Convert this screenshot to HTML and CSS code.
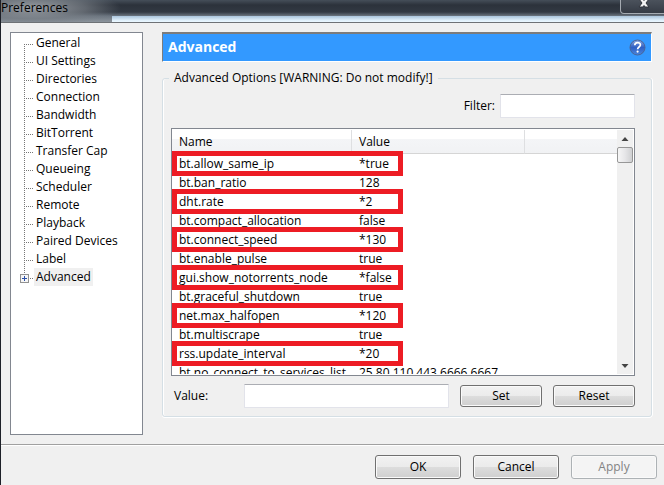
FILE: index.html
```html
<!DOCTYPE html>
<html lang="en">

<head>
  <meta charset="UTF-8">
  <meta name="viewport" content="width=device-width, initial-scale=1.0">
  <title>Preferences</title>
  <link rel="stylesheet" href="styles.css">
</head>

<body>
  <!-- Title bar -->
  <header class="titlebar">
    <span class="title">Preferences</span>
    <button class="close" type="button" aria-label="Close">
      <svg width="12" height="10" viewBox="0 0 12 10">
        <path d="M1 -1h4l1 1.500 1-1.500h4l-3 4 3 4h-4l-1-1.500-1 1.500h-4l3-4z" fill="#f4f4f4" stroke="#30343c" stroke-width="1"/>
      </svg>
    </button>
  </header>

  <main class="content">
    <!-- Category tree -->
    <nav class="tree">
      <ul>
        <li><a href="#general">General</a></li>
        <li><a href="#ui">UI Settings</a></li>
        <li><a href="#directories">Directories</a></li>
        <li><a href="#connection">Connection</a></li>
        <li><a href="#bandwidth">Bandwidth</a></li>
        <li><a href="#bittorrent">BitTorrent</a></li>
        <li><a href="#transfer">Transfer Cap</a></li>
        <li><a href="#queueing">Queueing</a></li>
        <li><a href="#scheduler">Scheduler</a></li>
        <li><a href="#remote">Remote</a></li>
        <li><a href="#playback">Playback</a></li>
        <li><a href="#devices">Paired Devices</a></li>
        <li><a href="#label">Label</a></li>
        <li class="parent">
          <button class="expand" type="button" aria-label="Expand Advanced">
            <svg width="9" height="9" viewBox="0 0 9 9">
              <rect x="0.500" y="0.500" width="8" height="8" fill="#f6f6f6" stroke="#919191"/>
              <path d="M2 4.500h5M4.500 2v5" stroke="#2b4fa8"/>
            </svg>
          </button>
          <a href="#advanced" class="selected">Advanced</a>
        </li>
      </ul>
    </nav>

    <!-- Advanced page -->
    <section class="page">
      <div class="banner">
        <h1>Advanced</h1>
        <button class="help" type="button" aria-label="Help">
          <svg width="17" height="17" viewBox="0 0 17 17">
            <defs>
              <linearGradient id="helpFill" x1="0" y1="0" x2="0" y2="1">
                <stop offset="0" stop-color="#8aa6e0"/>
                <stop offset="0.500" stop-color="#2f5fc4"/>
                <stop offset="1" stop-color="#4a86dc"/>
              </linearGradient>
            </defs>
            <circle cx="8.500" cy="8.500" r="7.500" fill="url(#helpFill)" stroke="#4a6496"/>
            <path d="M5.800 6.300c0-3.600 5.600-3.500 5.600-.3 0 2-2.800 2-2.800 4.200" fill="none" stroke="#fff" stroke-width="1.700"/>
            <circle cx="8.600" cy="12.600" r="1.100" fill="#fff"/>
          </svg>
        </button>
      </div>

      <fieldset class="options">
        <legend>Advanced Options [WARNING: Do not modify!]</legend>

        <div class="filter-row">
          <label for="filter">Filter:</label>
          <input id="filter" type="text">
        </div>

        <div class="list">
          <div class="rows">
            <table>
              <thead>
                <tr><th class="col-name">Name</th><th class="col-value">Value</th><th></th></tr>
              </thead>
              <tbody>
                <tr class="marked"><td>bt.allow_same_ip</td><td>*true</td><td></td></tr>
                <tr><td>bt.ban_ratio</td><td>128</td><td></td></tr>
                <tr class="marked"><td>dht.rate</td><td>*2</td><td></td></tr>
                <tr><td>bt.compact_allocation</td><td>false</td><td></td></tr>
                <tr class="marked"><td>bt.connect_speed</td><td>*130</td><td></td></tr>
                <tr><td>bt.enable_pulse</td><td>true</td><td></td></tr>
                <tr class="marked"><td>gui.show_notorrents_node</td><td>*false</td><td></td></tr>
                <tr><td>bt.graceful_shutdown</td><td>true</td><td></td></tr>
                <tr class="marked"><td>net.max_halfopen</td><td>*120</td><td></td></tr>
                <tr><td>bt.multiscrape</td><td>true</td><td></td></tr>
                <tr class="marked"><td>rss.update_interval</td><td>*20</td><td></td></tr>
                <tr><td>bt.no_connect_to_services_list</td><td>25,80,110,443,6666,6667</td><td></td></tr>
              </tbody>
            </table>
          </div>
          <div class="scrollbar">
            <svg width="16" height="17" viewBox="0 0 16 17"><path d="M4.500 11L8 7l3.500 4z" fill="#444"/></svg>
            <div class="thumb"></div>
            <svg class="down" width="16" height="17" viewBox="0 0 16 17"><path d="M4.500 7h7L8 11z" fill="#444"/></svg>
          </div>
        </div>

        <div class="value-row">
          <label for="value">Value:</label>
          <input id="value" type="text">
          <button class="btn" type="button">Set</button>
          <button class="btn" type="button">Reset</button>
        </div>
      </fieldset>
    </section>
  </main>

  <!-- Dialog buttons -->
  <footer class="actions">
    <button class="btn" type="button">OK</button>
    <button class="btn" type="button">Cancel</button>
    <button class="btn" type="button" disabled>Apply</button>
  </footer>
</body>

</html>
```
FILE: styles.css
```css
*,
*::after {
  box-sizing: border-box;
}

body {
  margin: 0;
  height: 100vh;
  display: flex;
  flex-direction: column;
  overflow: hidden;
  border-left: 1px solid #1d2028;
  background: #f0f0f0;
  color: #000;
  font-family: "Open Sans", "Noto Sans", sans-serif;
  font-size: 12px;
  line-height: 18px;
}

button,
input {
  font: inherit;
  color: inherit;
}

/* Title bar */
.titlebar {
  display: flex;
  justify-content: space-between;
  align-items: flex-start;
  height: 23px;
  flex: none;
  border-bottom: 1px solid #6e7276;
  background:
    linear-gradient(#a9c4dc, #e8f6ff 5px) no-repeat 111px 16px / 100% 6px,
    radial-gradient(ellipse 90px 18px at 30px 8px, #9a9fa5, rgba(120, 126, 133, 0.7) 60%, rgba(70, 76, 86, 0)) no-repeat,
    linear-gradient(#454e59, #2c323b 5px, #323943 12px, #6b7580 16px, #8d959d 22px);
}

.title {
  line-height: 16px;
}

.close {
  display: flex;
  justify-content: center;
  width: 48px;
  height: 14px;
  margin-right: -4px;
  padding: 0;
  border: 1px solid #a5abb2;
  border-top: 0;
  border-radius: 0 0 4px 4px;
  background: linear-gradient(#4b525c, #353b45);
}

.content {
  flex: 1;
  min-height: 0;
  display: flex;
  gap: 19px;
  padding: 9px 12px 9px 9px;
}

/* Category tree */
.tree {
  flex: none;
  width: 133px;
  padding: 1px 0;
  border: 1px solid #828790;
  background: #fff;
}

.tree ul {
  margin: 0;
  padding: 0;
  list-style: none;
}

.tree li {
  position: relative;
  height: 18px;
  padding-left: 23px;
  background:
    repeating-linear-gradient(90deg, #777 0 1px, transparent 1px 2px) no-repeat 13px 10px / 9px 1px,
    repeating-linear-gradient(#777 0 1px, transparent 1px 2px) no-repeat 13px 0 / 1px 18px;
}

.tree li:first-child {
  background-position: 13px 10px, 13px 10px;
}

.tree a {
  display: inline-block;
  padding: 0 2px;
  color: inherit;
  text-decoration: none;
}

.tree .parent {
  background-size: 9px 1px, 1px 10px;
}

.tree .selected {
  background: #f0f0f0;
}

.expand {
  position: absolute;
  top: 6px;
  left: 9px;
  display: flex;
  padding: 0;
  border: 0;
  background: none;
}

/* Page */
.page {
  flex: 1;
  min-width: 0;
  display: flex;
  flex-direction: column;
}

.banner {
  display: flex;
  justify-content: space-between;
  align-items: center;
  height: 30px;
  flex: none;
  padding: 0 5px;
  border: 1px solid #fff;
  border-top: 2px solid #7c7c7c;
  border-left-color: #7c7c7c;
  background: #3399ff;
}

.banner h1 {
  margin: 0;
  padding-bottom: 2px;
  color: #fff;
  font-size: 14px;
  font-weight: 700;
}

.help {
  display: flex;
  padding: 0;
  border: 0;
  background: none;
}

.options {
  flex: 1;
  min-width: 0;
  min-height: 0;
  display: flex;
  flex-direction: column;
  margin: 7px 0 18px;
  padding: 7px 16px 8px 8px;
  border: 1px solid #d5dfe5;
  border-radius: 3px;
  box-shadow: inset 1px 0 #fff, 0 1px #fff, 1px 0 #fff;
}

.options legend {
  margin-left: -2px;
  padding: 0 5px;
}

.options input {
  height: 24px;
  padding: 0 4px;
  border: 1px solid #e2e3ea;
  border-top-color: #abadb3;
  border-radius: 1px;
  background: #fff;
}

.filter-row {
  display: flex;
  justify-content: flex-end;
  align-items: center;
  gap: 5px;
  margin-bottom: 10px;
}

.filter-row input {
  width: 135px;
}

/* Options list */
.list {
  flex: 1;
  min-height: 0;
  display: flex;
  padding: 1px 1px 1px 0;
  border: 1px solid #828790;
  background: #fff;
}

.rows {
  flex: 1;
  min-width: 0;
  overflow: hidden;
}

table {
  width: 100%;
  table-layout: fixed;
  border-collapse: separate;
  border-spacing: 0;
}

th {
  height: 24px;
  padding: 0 7px;
  border-right: 1px solid #dedfe1;
  border-bottom: 1px solid #d5d5d5;
  background: linear-gradient(#fff 40%, #f4f5f7 40%, #f1f2f4);
  font-weight: 400;
  text-align: left;
}

th:last-child {
  border-right: 0;
}

.col-name {
  width: 180px;
}

.col-value {
  width: 173px;
}

td {
  height: 19px;
  padding: 0 7px;
  white-space: nowrap;
}

/* Red frame over the changed settings */
.marked {
  position: relative;
}

.marked td:first-child::after {
  content: '';
  position: absolute;
  top: -3px;
  left: 0;
  width: 231px;
  height: 25px;
  border: 5px solid #ed1c24;
}

.scrollbar {
  flex: none;
  display: flex;
  flex-direction: column;
  width: 16px;
  background: #f0f0f0;
}

.scrollbar .down {
  margin-top: auto;
}

.thumb {
  height: 16px;
  border: 1px solid #979797;
  border-radius: 2px;
  background: linear-gradient(90deg, #f6f6f6, #e6e6e8 50%, #cfd0d2);
}

/* Value editor */
.value-row {
  display: flex;
  align-items: center;
  margin-top: 8px;
  padding-left: 3px;
}

.value-row label {
  width: 70px;
}

.value-row input {
  flex: 1;
  min-width: 0;
}

.btn {
  width: 86px;
  height: 24px;
  padding: 0;
  border: 1px solid #707070;
  border-radius: 3px;
  background: linear-gradient(#f2f2f2, #ebebeb 50%, #dddddd 50%, #cfcfcf);
  box-shadow: inset 0 0 0 1px #fafafa;
}

.value-row .btn {
  width: 82px;
  height: 22px;
  margin-left: 11px;
  line-height: 18px;
}

.btn:disabled {
  border-color: #adb2b5;
  background: #f4f4f4;
  color: #838383;
}

.actions {
  flex: none;
  display: flex;
  justify-content: flex-end;
  gap: 12px;
  padding: 10px 7px 6px;
  border-top: 1px solid #a0a0a0;
  box-shadow: inset 0 1px #fff;
}
```
